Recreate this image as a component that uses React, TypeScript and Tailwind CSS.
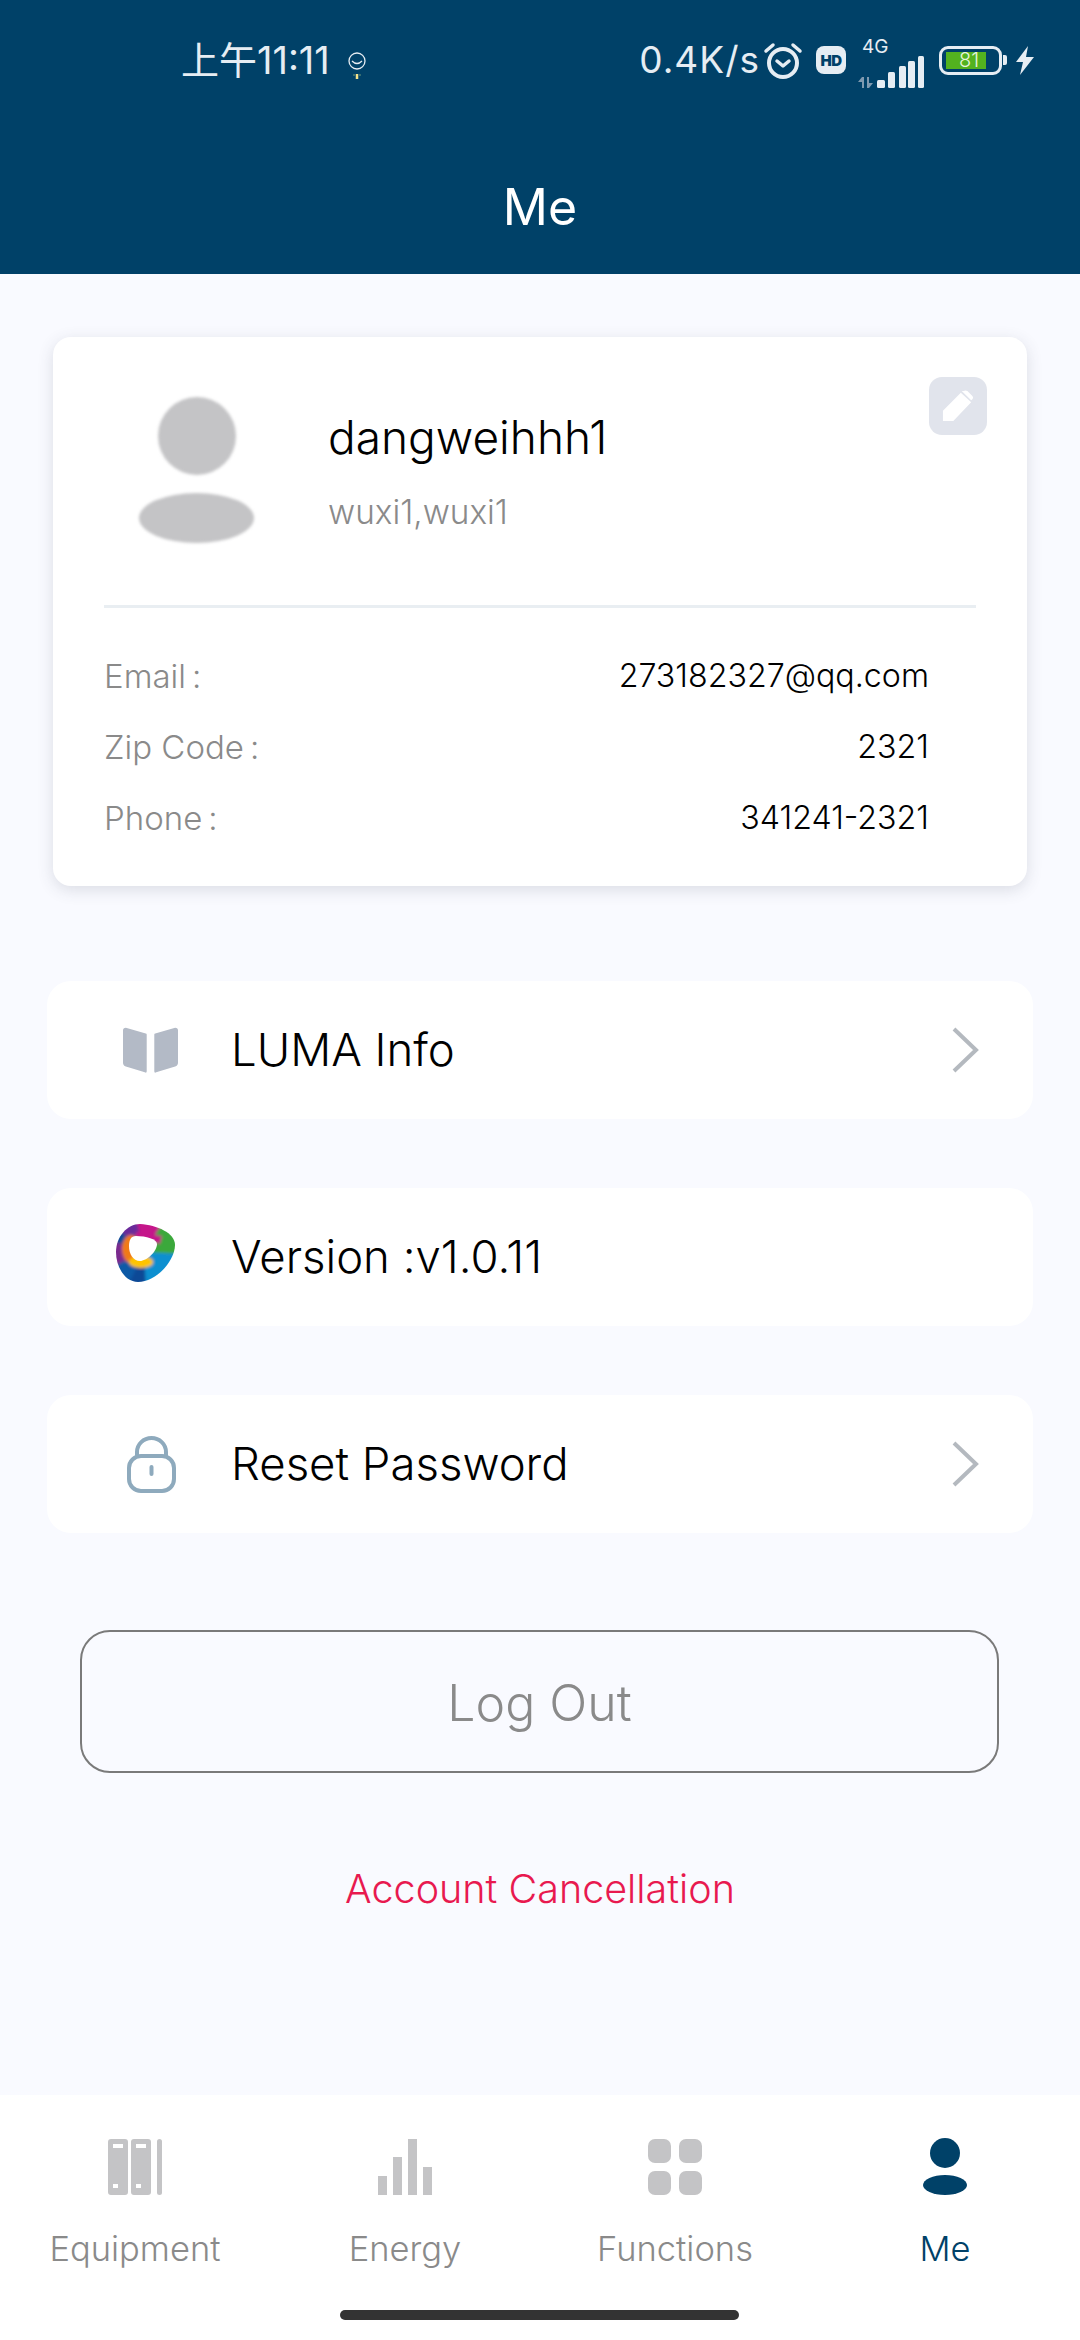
import React from "react";

const FONT = "[font-family:Inter,'Noto_Sans_CJK_SC',sans-serif]";
const LIGHT = "#e6edf3";

function Alarm() {
  return (
    <svg width="40" height="37" viewBox="0 0 40 37" fill="none" stroke={LIGHT} strokeLinecap="round">
      <circle cx="20" cy="21" r="14" strokeWidth="4" />
      <path d="M14 19l6 5 6-5" strokeWidth="3.5" strokeLinejoin="round" />
      <path d="M3 9 10 3M37 9 30 3" strokeWidth="3.5" />
    </svg>
  );
}

function Signal() {
  return (
    <svg width="66" height="33" viewBox="0 0 66 33">
      <path d="M0 27 4 22h2v11H4v-6zM9 22h2v6h4l-4 5H9z" fill="#7f9ab0" />
      <rect x="19" y="25" width="8" height="8" rx="1.5" fill={LIGHT} />
      <rect x="30" y="17" width="7" height="16" rx="1.5" fill={LIGHT} />
      <rect x="41" y="11" width="7" height="22" rx="1.5" fill={LIGHT} />
      <rect x="50" y="6" width="7" height="27" rx="1.5" fill={LIGHT} />
      <rect x="60" y="1" width="6" height="32" rx="1.5" fill={LIGHT} />
    </svg>
  );
}

function StatusBar() {
  return (
    <div className="flex h-[120px] items-start justify-between pl-[181px] pr-[46px] pt-[39px] text-[#e6edf3]">
      <div className="flex items-center">
        <span className="text-[38px] font-normal leading-[42px]">上午11:11</span>
        <svg className="ml-[18px] mt-[12px]" width="18" height="28" viewBox="0 0 18 28" fill="none" stroke={LIGHT} strokeWidth="1.3">
          <ellipse cx="9" cy="9" rx="8" ry="8" />
          <path d="M4 9q5 5 10 0" />
          <path d="M9 22v5" stroke="#f2e28a" strokeWidth="2.5" />
          <path d="M6 22v2M12 22v2" stroke="#6f9a7a" strokeWidth="1" />
        </svg>
      </div>
      <div className="flex items-center">
        <span className="text-[37px] font-normal leading-[42px] tracking-[1px]">0.4K/s</span>
        <div className="ml-[3px]"><Alarm /></div>
        <div className="ml-[13px] flex h-[28px] w-[30px] items-center justify-center rounded-[8px] bg-[#e6edf3] text-[15px] font-black leading-none tracking-[-0.5px] text-[#004168]">HD</div>
        <div className="relative ml-[12px] h-[42px] w-[66px]">
          <span className="absolute left-[4px] top-[-2px] text-[19px] font-normal leading-[20px]">4G</span>
          <div className="absolute bottom-[-7px] left-0 flex"><Signal /></div>
        </div>
        <div className="ml-[15px] flex h-[29px] w-[63px] items-center rounded-[9px] border-[3px] border-[#e6edf3] pl-[4px]">
          <div className="flex h-[17px] w-[40px] items-center justify-center bg-[#53b21f] pl-[6px] text-[20px] leading-none text-[#e6f5dc]">81</div>
        </div>
        <div className="ml-[1px] h-[10px] w-[4px] rounded-r-[2px] bg-[#e6edf3]" />
        <svg className="ml-[8px]" width="19" height="29" viewBox="0 0 19 29"><path d="M13 0 1 16h7L5 29 19 11h-8z" fill={LIGHT} /></svg>
      </div>
    </div>
  );
}

function Detail({ label, value }: { label: string; value: string }) {
  return (
    <div className="flex h-[71px] items-center justify-between">
      <span className="text-[33px] text-[#8a8a8a]">{label}<span className="ml-[6px]">:</span></span>
      <span className="text-[32.2px] text-black">{value}</span>
    </div>
  );
}

function Chevron() {
  return (
    <svg width="28" height="46" viewBox="0 0 28 46" fill="none" stroke="#b4b9bf" strokeWidth="4">
      <path d="M3 2l22 21L3 44" />
    </svg>
  );
}

function Row({ icon, label, chevron }: { icon: React.ReactNode; label: string; chevron?: boolean }) {
  return (
    <div className="flex h-[138px] items-center rounded-[24px] bg-white pr-[54px]">
      <div className="flex w-[184px] shrink-0 items-center justify-center pl-[11px]">{icon}</div>
      <span className="flex-1 text-[45.5px] text-black">{label}</span>
      {chevron && <Chevron />}
    </div>
  );
}

function Book() {
  return (
    <svg width="55" height="47" viewBox="0 0 58 48" fill="#b3bac6" className="ml-[12px]">
      <path d="M3 0 24 6q1 0 1 1v39q0 2-2 1L3 41q-3-1-3-4V3q0-3 3-3zM55 0 34 6q-1 0-1 1v39q0 2 2 1l20-6q3-1 3-4V3q0-3-3-3z" />
    </svg>
  );
}

function Logo() {
  const blob = "M24 0C41 1 59 9 59 21C59 36 41 58 22 58C9 58 0 43 0 28C0 13 11 0 24 0Z";
  return (
    <svg width="60" height="59" viewBox="0 0 60 59" className="mb-[8px] ml-[2px]">
      <defs>
        <clipPath id="lc"><path d={blob} /></clipPath>
        <filter id="lb" x="-20%" y="-20%" width="140%" height="140%"><feGaussianBlur stdDeviation="1.8" /></filter>
        <filter id="lw" x="-20%" y="-20%" width="140%" height="140%"><feGaussianBlur stdDeviation="0.7" /></filter>
      </defs>
      <g clipPath="url(#lc)">
        <g filter="url(#lb)">
          <rect x="-5" y="-5" width="70" height="70" fill="#0b4a96" />
          <path d="M28 28 -8 -4 H30 V28Z" fill="#6a2a9a" />
          <path d="M28 28 20 -6 H52 L66 4Z" fill="#c5128a" />
          <path d="M28 28 50 -6 H66 V36Z" fill="#3aa83a" />
          <path d="M28 28 66 30 50 66 30 66Z" fill="#0a8fd0" />
          <path d="M28 28 -6 16 V50Z" fill="#7a2a8e" />
          <path d="M28 28 -6 44 V66 H10Z" fill="#0c5aa6" />
          <ellipse cx="15" cy="25" rx="9" ry="14" fill="#f07a12" />
          <ellipse cx="25" cy="38" rx="12" ry="6" fill="#ffc400" />
          <path d="M20 8 46 12 44 20 20 14Z" fill="#c5128a" />
        </g>
      </g>
      <path d="M20 12C30 12 41 15 41 20C41 28 30 37 24 37C17 37 13 30 13 22C13 16 15 12 20 12Z" fill="#fff" filter="url(#lw)" />
    </svg>
  );
}

function Lock() {
  return (
    <svg width="49" height="57" viewBox="0 0 49 57" fill="none" stroke="#8eaabd" strokeWidth="4" className="ml-[14px]">
      <path d="M10 21V16a14.5 14 0 0 1 29 0v5" />
      <rect x="2" y="20" width="45" height="35" rx="12" />
      <path d="M24.500 31v7" strokeLinecap="round" />
    </svg>
  );
}

function Tab({ icon, label, active }: { icon: React.ReactNode; label: string; active?: boolean }) {
  return (
    <div className="flex flex-col items-center">
      <div className="flex h-[60px] items-center justify-center">{icon}</div>
      <span className={`mt-[30px] text-[34.5px] leading-[44px] ${active ? "text-[#004168]" : "text-[#8a8a8a]"}`}>{label}</span>
    </div>
  );
}

const EquipIcon = (
  <svg width="54" height="56" viewBox="0 0 54 56" fill="#c4c4c6">
    <path fillRule="evenodd" d="M3 0h14q3 0 3 3v50q0 3-3 3H3q-3 0-3-3V3q0-3 3-3zM5 5v4h10V5zM5 45v4h5v-4z" />
    <path fillRule="evenodd" d="M26 0h14q3 0 3 3v50q0 3-3 3H26q-3 0-3-3V3q0-3 3-3zM28 5v4h10V5zM28 45v4h5v-4z" />
    <rect x="49" y="0" width="5" height="56" rx="2.500" />
  </svg>
);
const EnergyIcon = (
  <svg width="54" height="56" viewBox="0 0 54 56" fill="#c4c4c6">
    <rect x="0" y="37" width="9" height="19" />
    <rect x="15" y="18" width="9" height="38" />
    <rect x="30" y="0" width="9" height="56" />
    <rect x="45" y="28" width="9" height="28" />
  </svg>
);
const FuncIcon = (
  <svg width="54" height="56" viewBox="0 0 54 56" fill="#c4c4c6">
    <rect x="0" y="0" width="23" height="24" rx="7" />
    <rect x="31" y="0" width="23" height="24" rx="7" />
    <rect x="0" y="32" width="23" height="24" rx="7" />
    <rect x="31" y="32" width="23" height="24" rx="7" />
  </svg>
);
const MeIcon = (
  <svg width="44" height="58" viewBox="0 0 44 58" fill="#004168">
    <circle cx="22" cy="15" r="15" />
    <ellipse cx="22" cy="47" rx="22" ry="10" />
  </svg>
);

export default function App() {
  return (
    <div className={`flex h-[2340px] w-[1080px] flex-col overflow-hidden bg-[#f9faff] font-[350] ${FONT}`}>
      <header className="h-[274px] shrink-0 bg-[#004168]">
        <StatusBar />
        <h1 className="mt-[57px] text-center text-[50px] font-normal leading-[60px] text-white">Me</h1>
      </header>

      <main className="flex-1 px-[47px] pt-[63px]">
        <section className="relative mx-[6px] h-[549px] rounded-[18px] bg-white px-[51px] shadow-[0_4px_16px_rgba(60,70,90,0.16)]">
          <div className="flex h-[268px] items-start">
            <div className="ml-[35px] mt-[60px] flex w-[115px] flex-col items-center gap-[18px] blur-[1.5px]">
              <div className="h-[78px] w-[78px] rounded-full bg-[#c4c4c6]" />
              <div className="h-[50px] w-[115px] rounded-[50%] bg-[#c4c4c6]" />
            </div>
            <div className="ml-[74px] mt-[73px]">
              <div className="text-[46px] leading-[54px] text-black">dangweihhh1</div>
              <div className="mt-[28px] text-[33.3px] leading-[40px] text-[#8a8a8a]">wuxi1,wuxi1</div>
            </div>
          </div>
          <button className="absolute right-[40px] top-[40px] flex h-[58px] w-[58px] items-center justify-center rounded-[13px] bg-[#e1e4ec]">
            <svg width="32" height="34" viewBox="0 0 34 34" fill="#fff">
              <path d="M1 33V22L20 3l11 10-19 20zM23 1q2-1 4 0l5 5q2 2 0 4l-1 1-10-10z" />
            </svg>
          </button>
          <div className="h-[3px] bg-[#e9eef2]" />
          <div className="pr-[47px] pt-[33px]">
            <Detail label="Email" value="273182327@qq.com" />
            <Detail label="Zip Code" value="2321" />
            <Detail label="Phone" value="341241-2321" />
          </div>
        </section>

        <div className="mt-[95px] flex flex-col gap-[69px]">
          <Row icon={<Book />} label="LUMA Info" chevron />
          <Row icon={<Logo />} label="Version :v1.0.11" />
          <Row icon={<Lock />} label="Reset Password" chevron />
        </div>

        <button className="mx-[33px] mt-[97px] flex h-[143px] w-[919px] items-center justify-center rounded-[30px] border-2 border-[#7a7a7a] pt-[3px] text-[50px] text-[#8a8a8a]">
          Log Out
        </button>
        <div className="mt-[88px] text-center text-[39.5px] leading-[56px] text-[#e8194f]">Account Cancellation</div>
      </main>

      <nav className="relative grid h-[245px] shrink-0 grid-cols-4 bg-white pt-[42px]">
        <Tab icon={EquipIcon} label="Equipment" />
        <Tab icon={EnergyIcon} label="Energy" />
        <Tab icon={FuncIcon} label="Functions" />
        <Tab icon={MeIcon} label="Me" active />
        <div className="absolute bottom-[20px] left-[340px] h-[10px] w-[399px] rounded-full bg-[#333333]" />
      </nav>
    </div>
  );
}
